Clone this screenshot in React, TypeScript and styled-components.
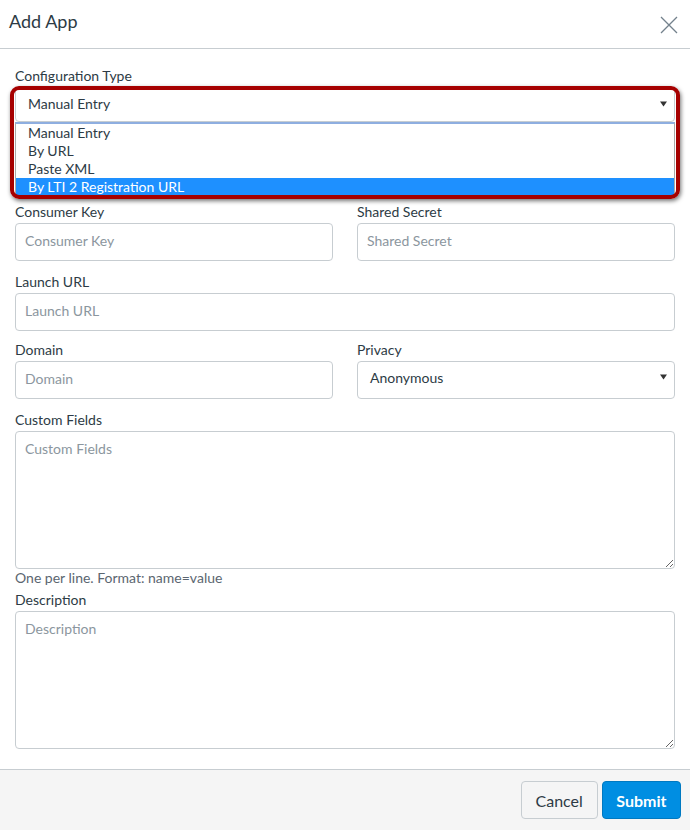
import React from "react";
import styled, { createGlobalStyle } from "styled-components";

const Global = createGlobalStyle`
  html, body { margin: 0; padding: 0; background: #fff; }
  body { font-family: Lato, "Open Sans", Arial, sans-serif; color: #2d3b45; }
  * { box-sizing: border-box; }
`;

const Dialog = styled.div`
  width: 690px;
  height: 830px;
  display: flex;
  flex-direction: column;
  background: #fff;
`;

const Header = styled.div`
  height: 49px;
  flex: none;
  display: flex;
  align-items: center;
  justify-content: space-between;
  padding: 0 12px 6px 9px;
  border-bottom: 1px solid #c7cdd1;
`;

const Title = styled.h1`
  margin: 0;
  font-size: 18px;
  font-weight: 400;
  color: #2d3b45;
`;

const CloseBtn = styled.button`
  border: 0;
  background: transparent;
  padding: 0;
  width: 18px;
  height: 18px;
  display: flex;
  margin-top: 8px;
`;

const Body = styled.div`
  flex: 1;
  padding: 17px 15px 0 15px;
  display: flex;
  flex-direction: column;
`;

const Row = styled.div<{ $mb?: number }>`
  display: grid;
  grid-template-columns: 1fr 1fr;
  column-gap: 24px;
  margin-bottom: ${(p) => (p.$mb ?? 0)}px;
`;

const Field = styled.div<{ $mb?: number }>`
  display: flex;
  flex-direction: column;
  margin-bottom: ${(p) => (p.$mb ?? 10)}px;
  position: relative;
`;

const Label = styled.label`
  font-size: 14px;
  line-height: 20px;
  margin-bottom: 1px;
  color: #2d3b45;
`;

const Input = styled.input`
  height: 38px;
  border: 1px solid #c7cdd1;
  border-radius: 4px;
  padding: 0 9px 4px;
  font-family: inherit;
  font-size: 14px;
  color: #2d3b45;
  background: #fff;
  outline: none;
  &::placeholder { color: #8b969e; }
`;

const TextArea = styled.textarea`
  height: 138px;
  border: 1px solid #c7cdd1;
  border-radius: 4px;
  padding: 7px 9px;
  font-family: inherit;
  font-size: 14px;
  line-height: 20px;
  color: #2d3b45;
  resize: vertical;
  outline: none;
  &::placeholder { color: #8b969e; }
`;

const Help = styled.div`
  font-size: 14px;
  line-height: 18px;
  color: #5b6670;
  margin-bottom: 3px;
`;

const SelectBox = styled.div<{ $h?: number; $pb?: number }>`
  height: ${(p) => p.$h ?? 38}px;
  border: 1px solid #c7cdd1;
  border-radius: 4px;
  padding: 0 7px ${(p) => p.$pb ?? 2}px 12px;
  display: flex;
  align-items: center;
  justify-content: space-between;
  font-size: 14px;
  color: #2d3b45;
  background: #fff;
`;

const DropList = styled.ul`
  margin: 0;
  padding: 0;
  list-style: none;
  background: #fff;
  border: 1px solid #a9a9a9;
  border-top: 2px solid #8eaee0;
`;

const Option = styled.li<{ $active?: boolean }>`
  height: 18px;
  line-height: 17px;
  padding-left: 12px;
  font-size: 14px;
  color: ${(p) => (p.$active ? "#fff" : "#2d3b45")};
  background: ${(p) => (p.$active ? "#1e90ff" : "#fff")};
`;

const Annotation = styled.div`
  position: absolute;
  top: 20px;
  left: -5px;
  right: -5px;
  height: 113px;
  border: 4px solid #a60000;
  border-radius: 9px;
  box-shadow: 1px 2px 4px rgba(0, 0, 0, 0.55);
  pointer-events: none;
`;

const Footer = styled.div`
  height: 61px;
  flex: none;
  border-top: 1px solid #c7cdd1;
  background: #f5f5f5;
  display: flex;
  justify-content: flex-end;
  align-items: center;
  gap: 4px;
  padding: 0 9px 0 0;
`;

const Button = styled.button<{ $primary?: boolean }>`
  height: 38px;
  padding: 0 ${(p) => (p.$primary ? "13.5px" : "14px")};
  border-radius: 4px;
  font-family: inherit;
  font-size: 16px;
  font-weight: ${(p) => (p.$primary ? 700 : 400)};
  color: ${(p) => (p.$primary ? "#fff" : "#2d3b45")};
  background: ${(p) => (p.$primary ? "#008ee2" : "#f5f5f5")};
  border: 1px solid ${(p) => (p.$primary ? "#0079c1" : "#c7cdd1")};
`;

const Caret = () => (
  <svg width="7" height="6" viewBox="0 0 7 6">
    <path d="M0 0.5 L7 0.5 L3.5 5.5 Z" fill="#333" />
  </svg>
);

export default function App() {
  return (
    <>
      <Global />
      <Dialog>
        <Header>
          <Title>Add App</Title>
          <CloseBtn aria-label="Close">
            <svg width="18" height="18" viewBox="0 0 18 18">
              <path d="M1 1 L17 17 M17 1 L1 17" stroke="#73818c" strokeWidth="1.3" fill="none" />
            </svg>
          </CloseBtn>
        </Header>
        <Body>
          <Field $mb={5}>
            <Label>Configuration Type</Label>
            <SelectBox $h={35}>
              <span>Manual Entry</span>
              <Caret />
            </SelectBox>
            <DropList>
              <Option>Manual Entry</Option>
              <Option>By URL</Option>
              <Option>Paste XML</Option>
              <Option $active>By LTI 2 Registration URL</Option>
            </DropList>
            <Annotation />
          </Field>
          <Row $mb={1}>
            <Field>
              <Label>Consumer Key</Label>
              <Input placeholder="Consumer Key" />
            </Field>
            <Field>
              <Label>Shared Secret</Label>
              <Input placeholder="Shared Secret" />
            </Field>
          </Row>
          <Field $mb={9}>
            <Label>Launch URL</Label>
            <Input placeholder="Launch URL" />
          </Field>
          <Row $mb={1}>
            <Field>
              <Label>Domain</Label>
              <Input placeholder="Domain" />
            </Field>
            <Field>
              <Label>Privacy</Label>
              <SelectBox $pb={6}>
                <span>Anonymous</span>
                <Caret />
              </SelectBox>
            </Field>
          </Row>
          <Field $mb={0}>
            <Label>Custom Fields</Label>
            <TextArea placeholder="Custom Fields" />
          </Field>
          <Help>One per line. Format: name=value</Help>
          <Field $mb={0}>
            <Label>Description</Label>
            <TextArea placeholder="Description" />
          </Field>
        </Body>
        <Footer>
          <Button>Cancel</Button>
          <Button $primary>Submit</Button>
        </Footer>
      </Dialog>
    </>
  );
}
